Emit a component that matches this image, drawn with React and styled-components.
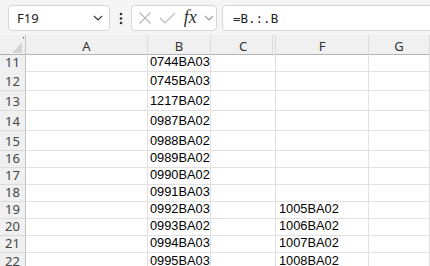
import React from "react";
import styled, { createGlobalStyle } from "styled-components";

const Global = createGlobalStyle`
  html, body { margin: 0; padding: 0; background: #ffffff; overflow: hidden; }
  body { width: 430px; height: 266px; }
  * { box-sizing: border-box; }
`;

const Page = styled.div`
  width: 430px;
  height: 266px;
  overflow: hidden;
  background: #fff;
  font-family: "Liberation Sans", Arial, sans-serif;
`;

const Toolbar = styled.div`
  height: 35px;
  background: #f5f5f5;
  display: flex;
  align-items: flex-start;
  padding: 5px 0 0 8px;
`;

const Box = styled.div`
  height: 26px;
  background: #fff;
  border: 1px solid #d6d6d6;
  border-radius: 4px;
  display: flex;
  align-items: center;
`;

const NameBox = styled(Box)`
  width: 102px;
  padding: 0 6px 0 8px;
  justify-content: space-between;
  font-family: "Noto Sans", "Open Sans", sans-serif;
  font-size: 13px;
  color: #222;
`;

const DotsWrap = styled.div`
  width: 21px;
  height: 26px;
  display: flex;
  align-items: center;
  justify-content: center;
`;

const ToolsBox = styled(Box)`
  width: 86px;
  padding: 0 2px 0 6px;
  justify-content: space-between;
`;

const Fx = styled.span`
  font-family: "Liberation Serif", "Times New Roman", serif;
  font-style: italic;
  font-size: 18px;
  color: #333;
  line-height: 1;
  margin-top: -2px;
`;

const FormulaBox = styled(Box)`
  flex: 1;
  margin-left: 5px;
  margin-right: -10px;
  padding-left: 10px;
  font-family: "DejaVu Sans Mono", "Liberation Mono", monospace;
  font-size: 12.5px;
  color: #222;
`;

const COLS = "26px 122px 63px 65px 93px 1fr";

const HeaderRow = styled.div`
  display: grid;
  grid-template-columns: ${COLS};
  height: 20px;
  background: #f0f0f0;
  border-bottom: 1px solid #b4b4b4;
`;

const ColHead = styled.div`
  position: relative;
  border-right: 1px solid ${(p) => (p.$corner ? "#c4c4c4" : "#dcdcdc")};
  display: flex;
  align-items: center;
  justify-content: center;
  font-family: "Noto Sans", "Open Sans", sans-serif;
  font-size: 13px;
  color: #333;
  padding-top: 1px;
  ${(p) =>
    p.$hiddenAfter &&
    `&::after {
      content: "";
      position: absolute;
      top: 0;
      bottom: 0;
      right: 2px;
      width: 1px;
      background: #dcdcdc;
    }`}
`;

const Row = styled.div`
  display: grid;
  grid-template-columns: ${COLS};
  height: ${(p) => p.$h}px;
`;

const RowHead = styled.div`
  background: #f0f0f0;
  border-right: 1px solid #c4c4c4;
  border-bottom: 1px solid #dcdcdc;
  display: flex;
  align-items: flex-end;
  justify-content: center;
  padding-bottom: 1px;
  font-family: "Noto Sans", "Open Sans", sans-serif;
  font-size: 13px;
  line-height: 15px;
  color: #444;
`;

const Cell = styled.div`
  border-right: 1px solid #e1e1e1;
  border-bottom: 1px solid #e1e1e1;
  display: flex;
  align-items: flex-end;
  padding: 0 0 2px ${(p) => (p.$pl ? p.$pl : 2)}px;
  font-size: 12.8px;
  line-height: 14px;
  color: #000;
  white-space: nowrap;
  overflow: hidden;
`;

const rows = [
  { n: 11, h: 16, b: "0744BA03" },
  { n: 12, h: 20, b: "0745BA03" },
  { n: 13, h: 20, b: "1217BA02" },
  { n: 14, h: 20, b: "0987BA02" },
  { n: 15, h: 20, b: "0988BA02" },
  { n: 16, h: 17, b: "0989BA02" },
  { n: 17, h: 17, b: "0990BA02" },
  { n: 18, h: 17, b: "0991BA03" },
  { n: 19, h: 17, b: "0992BA03", f: "1005BA02" },
  { n: 20, h: 17, b: "0993BA02", f: "1006BA02" },
  { n: 21, h: 17, b: "0994BA03", f: "1007BA02" },
  { n: 22, h: 18, b: "0995BA03", f: "1008BA02" },
];

const Chevron = ({ color = "#333" }) => (
  <svg width="10" height="6" viewBox="0 0 10 6">
    <path d="M1 1 L5 5 L9 1" fill="none" stroke={color} strokeWidth="1.1" />
  </svg>
);

const Dots = () => (
  <svg width="4" height="13" viewBox="0 0 4 13">
    <circle cx="2" cy="2" r="1.3" fill="#333" />
    <circle cx="2" cy="6.5" r="1.3" fill="#333" />
    <circle cx="2" cy="11" r="1.3" fill="#333" />
  </svg>
);

const Cross = () => (
  <svg width="14" height="14" viewBox="0 0 14 14">
    <path d="M1.5 1.5 L12.5 12.5 M12.5 1.5 L1.5 12.5" stroke="#b8b8b8" strokeWidth="1.1" fill="none" />
  </svg>
);

const Check = () => (
  <svg width="17" height="12" viewBox="0 0 17 12">
    <path d="M1 6 L6 11 L16 1" stroke="#b8b8b8" strokeWidth="1.1" fill="none" />
  </svg>
);

const Corner = () => (
  <svg width="26" height="20" viewBox="0 0 26 20" style={{ display: "block" }}>
    <polygon points="23,6 23,17 13,17" fill="#d3d3d3" />
    <rect x="24" y="1" width="1" height="1" fill="#000" />
  </svg>
);

export default function App() {
  return (
    <Page>
      <Global />
      <Toolbar>
        <NameBox>
          <span>F19</span>
          <Chevron />
        </NameBox>
        <DotsWrap>
          <Dots />
        </DotsWrap>
        <ToolsBox>
          <Cross />
          <Check />
          <Fx>fx</Fx>
          <Chevron color="#999" />
        </ToolsBox>
        <FormulaBox>=B.:.B</FormulaBox>
      </Toolbar>
      <HeaderRow>
        <ColHead $corner>
          <Corner />
        </ColHead>
        <ColHead>A</ColHead>
        <ColHead>B</ColHead>
        <ColHead $hiddenAfter>C</ColHead>
        <ColHead>F</ColHead>
        <ColHead>G</ColHead>
      </HeaderRow>
      {rows.map((r) => (
        <Row key={r.n} $h={r.h}>
          <RowHead>{r.n}</RowHead>
          <Cell />
          <Cell>{r.b}</Cell>
          <Cell />
          <Cell $pl={3}>{r.f || ""}</Cell>
          <Cell />
        </Row>
      ))}
    </Page>
  );
}
